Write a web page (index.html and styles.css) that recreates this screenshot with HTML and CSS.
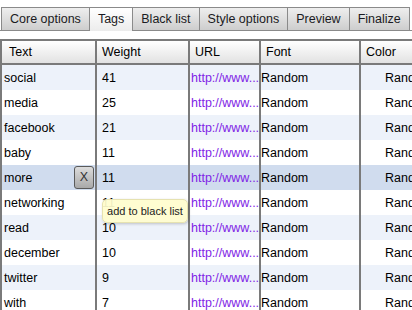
FILE: index.html
```html
<!DOCTYPE html>
<html>
<head>
<meta charset="utf-8">
<link rel="stylesheet" href="styles.css">
</head>
<body>
<div class="page">
  <div class="tabs">
    <div class="tab">Core options</div>
    <div class="tab active">Tags</div>
    <div class="tab">Black list</div>
    <div class="tab">Style options</div>
    <div class="tab">Preview</div>
    <div class="tab">Finalize</div>
  </div>
  <table class="grid">
    <thead>
      <tr>
        <th class="c-text">Text</th>
        <th class="c-weight">Weight</th>
        <th class="c-url">URL</th>
        <th class="c-font">Font</th>
        <th class="c-color">Color</th>
      </tr>
    </thead>
    <tbody>
      <tr class="odd"><td class="c-text">social</td><td class="c-weight">41</td><td class="c-url">http://www...</td><td class="c-font">Random</td><td class="c-color">Random</td></tr>
      <tr><td class="c-text">media</td><td class="c-weight">25</td><td class="c-url">http://www...</td><td class="c-font">Random</td><td class="c-color">Random</td></tr>
      <tr class="odd"><td class="c-text">facebook</td><td class="c-weight">21</td><td class="c-url">http://www...</td><td class="c-font">Random</td><td class="c-color">Random</td></tr>
      <tr><td class="c-text">baby</td><td class="c-weight">11</td><td class="c-url">http://www...</td><td class="c-font">Random</td><td class="c-color">Random</td></tr>
      <tr class="hover"><td class="c-text"><div class="textcell"><span>more</span><span class="xbtn">X</span></div></td><td class="c-weight">11</td><td class="c-url">http://www...</td><td class="c-font">Random</td><td class="c-color">Random</td></tr>
      <tr><td class="c-text">networking</td><td class="c-weight">11</td><td class="c-url">http://www...</td><td class="c-font">Random</td><td class="c-color">Random</td></tr>
      <tr class="odd"><td class="c-text">read</td><td class="c-weight">10</td><td class="c-url">http://www...</td><td class="c-font">Random</td><td class="c-color">Random</td></tr>
      <tr><td class="c-text">december</td><td class="c-weight">10</td><td class="c-url">http://www...</td><td class="c-font">Random</td><td class="c-color">Random</td></tr>
      <tr class="odd"><td class="c-text">twitter</td><td class="c-weight">9</td><td class="c-url">http://www...</td><td class="c-font">Random</td><td class="c-color">Random</td></tr>
      <tr><td class="c-text">with</td><td class="c-weight">7</td><td class="c-url">http://www...</td><td class="c-font">Random</td><td class="c-color">Random</td></tr>
    </tbody>
  </table>
  <div class="tooltip">add to black list</div>
</div>
</body>
</html>
```
FILE: styles.css
```css
html, body {
  margin: 0;
  padding: 0;
  overflow: hidden;
  background: #fff;
}
.page {
  position: relative;
  width: 412px;
  height: 310px;
  overflow: hidden;
  font-family: "Liberation Sans", Arial, sans-serif;
  font-size: 12.5px;
  color: #000;
}
.tabs {
  display: flex;
  padding: 7px 0 0 1px;
  border-bottom: 1px solid #8a8a8a;
  margin-bottom: 8px;
}
.tab {
  height: 22px;
  line-height: 22px;
  padding: 0 8px;
  border: 1px solid #8a8a8a;
  border-bottom: none;
  background: linear-gradient(#eeeeee, #cdcdcd);
  color: #1a1a22;
}
.tab + .tab {
  margin-left: -1px;
}
.tab.active {
  position: relative;
  z-index: 1;
  height: 23px;
  margin-bottom: -1px;
  background: linear-gradient(#ffffff, #ececec);
}
.grid {
  border-collapse: separate;
  border-spacing: 0;
  table-layout: fixed;
  width: 461px;
  border-left: 2px solid #7a7a7a;
  border-top: 2px solid #7a7a7a;
}
.grid th, .grid td {
  box-sizing: border-box;
  border-right: 2px solid #7a7a7a;
  white-space: nowrap;
  overflow: hidden;
  text-align: left;
  font-weight: normal;
}
.grid th {
  height: 24px;
  padding: 0 0 0 6px;
  background: linear-gradient(#ffffff, #e2e2e2);
  border-bottom: 2px solid #7a7a7a;
}
.grid td {
  height: 25px;
  padding: 0;
}
.grid th.c-text { width: 95px; padding-left: 7px; }
.grid th.c-weight { width: 93px; padding-left: 5px; }
.grid th.c-url { width: 71px; padding-left: 5px; }
.grid th.c-font { width: 100px; padding-left: 5px; }
.grid th.c-color { width: 100px; padding-left: 5px; }
.grid td.c-text { padding-left: 2px; padding-right: 1px; }
.grid td.c-weight { padding-left: 5px; }
.grid td.c-url { padding-left: 1px; color: #7f1fe6; }
.grid td.c-font { padding-left: 0; }
.grid td.c-color { padding-left: 24px; }
tr.odd td { background: #edf2fa; }
tr.hover td { background: #d0dcee; }
.textcell {
  display: flex;
  align-items: center;
  justify-content: space-between;
}
.xbtn {
  box-sizing: border-box;
  width: 20px;
  height: 23px;
  line-height: 21px;
  text-align: center;
  border: 1px solid #5a5a5a;
  border-radius: 3px;
  background: linear-gradient(#dcdcdc, #a9a9a9);
  color: #333;
  font-size: 12.5px;
}
.tooltip {
  position: absolute;
  left: 102px;
  top: 199px;
  box-sizing: border-box;
  width: 86px;
  height: 24px;
  line-height: 22px;
  text-align: center;
  font-size: 11px;
  color: #222;
  background: rgba(255, 253, 206, 0.93);
  border: 1px solid #e6e2b0;
  border-radius: 5px;
  box-shadow: 1px 1px 3px rgba(0, 0, 0, 0.2);
}
```
